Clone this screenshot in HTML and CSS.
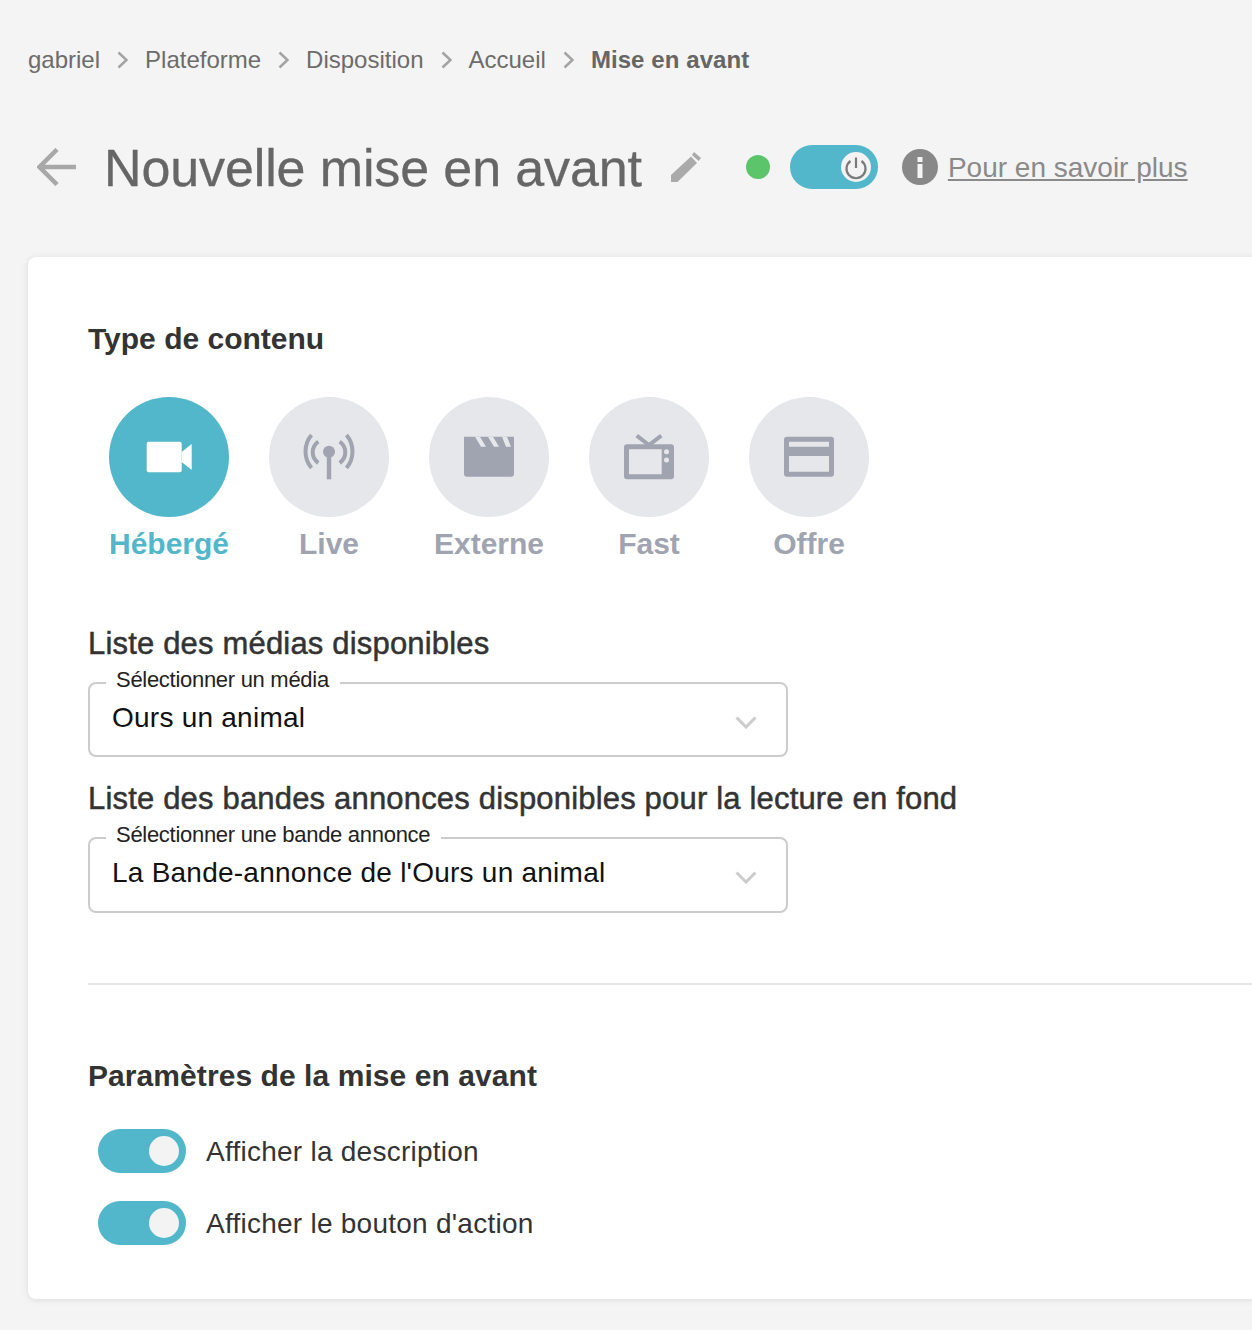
FILE: index.html
```html
<!DOCTYPE html>
<html lang="fr">
<head>
<meta charset="utf-8">
<title>Nouvelle mise en avant</title>
<link rel="stylesheet" href="styles.css">
</head>
<body>
<nav class="crumbs">
  <span>gabriel</span>
  <svg class="chev" viewBox="0 0 11 18"><path d="M1.500 1.500 9.500 9l-8 7.500"/></svg>
  <span>Plateforme</span>
  <svg class="chev" viewBox="0 0 11 18"><path d="M1.500 1.500 9.500 9l-8 7.500"/></svg>
  <span>Disposition</span>
  <svg class="chev" viewBox="0 0 11 18"><path d="M1.500 1.500 9.500 9l-8 7.500"/></svg>
  <span>Accueil</span>
  <svg class="chev" viewBox="0 0 11 18"><path d="M1.500 1.500 9.500 9l-8 7.500"/></svg>
  <strong>Mise en avant</strong>
</nav>

<header class="head">
  <svg class="back" viewBox="0 0 40 38"><path d="M39 19H4M20 1.500 2.500 19 20 36.500"/></svg>
  <h1 class="title">Nouvelle mise en avant</h1>
  <svg class="pencil" viewBox="0 0 30 30"><path d="M0 30v-7L20 4.500l6 6.500L6.500 30zM23 0l7 6-2.500 3L21 3z"/></svg>
  <span class="dot"></span>
  <span class="switch switch-power">
    <span class="knob">
      <svg class="power" viewBox="0 0 30 30"><path d="M15 5.500v10.500M9.500 9a9.500 9.500 0 1 0 11 0"/></svg>
    </span>
  </span>
  <svg class="info" viewBox="0 0 36 36"><circle cx="18" cy="18" r="18"/><rect class="info-mark" x="15.500" y="8" width="5" height="5"/><rect class="info-mark" x="15.500" y="15" width="5" height="14"/></svg>
  <a class="more" href="#">Pour en savoir plus</a>
</header>

<main class="card">
  <h2 class="section">Type de contenu</h2>
  <div class="types">
    <div class="type type-on">
      <span class="disc">
        <svg class="glyph" viewBox="0 0 60 60"><rect x="7.700" y="14.700" width="35" height="30.600" rx="2"/><path d="M42.700 25 52.700 17v26l-10-8z"/></svg>
      </span>
      <span class="type-label">Hébergé</span>
    </div>
    <div class="type">
      <span class="disc">
        <svg class="glyph" viewBox="0 0 60 60"><circle cx="30" cy="24.700" r="6"/><rect x="27.800" y="26" width="4.400" height="26.300"/><path class="wave" d="M12.500 8A25.700 25.700 0 0 0 12.500 41M19.300 14.700a13 13 0 0 0 0 21.300M47.500 8a25.700 25.700 0 0 1 0 33M40.700 14.700a13 13 0 0 1 0 21.300"/></svg>
      </span>
      <span class="type-label">Live</span>
    </div>
    <div class="type">
      <span class="disc">
        <svg class="glyph" viewBox="0 0 60 60"><path d="M5 9.700h50v37a3 3 0 0 1-3 3H8a3 3 0 0 1-3-3z"/><path class="cut" d="M16 9.700h5l6 10h-5zM29 9.700h5l6 10h-5zM43 9.700h5l4 10h-5z"/></svg>
      </span>
      <span class="type-label">Externe</span>
    </div>
    <div class="type">
      <span class="disc">
        <svg class="glyph" viewBox="0 0 60 60"><path class="antenna" d="M17.700 8.700 30 18 42.300 8.700"/><path fill-rule="evenodd" d="M8 17.300h44a3 3 0 0 1 3 3v29a3 3 0 0 1-3 3H8a3 3 0 0 1-3-3v-29a3 3 0 0 1 3-3zM10 22.300v25h32.700v-25z"/><circle class="cut" cx="47.500" cy="24.700" r="2.500"/><circle class="cut" cx="47.500" cy="33" r="2.500"/></svg>
      </span>
      <span class="type-label">Fast</span>
    </div>
    <div class="type">
      <span class="disc">
        <svg class="glyph" viewBox="0 0 60 60"><path fill-rule="evenodd" d="M8 9.700h44a3 3 0 0 1 3 3v34a3 3 0 0 1-3 3H8a3 3 0 0 1-3-3v-34a3 3 0 0 1 3-3zM10 14.700v5h40v-5zM10 29v15.700h40V29z"/></svg>
      </span>
      <span class="type-label">Offre</span>
    </div>
  </div>

  <h3 class="field-title field-first">Liste des médias disponibles</h3>
  <div class="select">
    <span class="legend">Sélectionner un média</span>
    <span class="value">Ours un animal</span>
    <svg class="caret" viewBox="0 0 22 13"><path d="M1.500 1.500 11 11l9.500-9.500"/></svg>
  </div>

  <h3 class="field-title field-next">Liste des bandes annonces disponibles pour la lecture en fond</h3>
  <div class="select select-tall">
    <span class="legend">Sélectionner une bande annonce</span>
    <span class="value">La Bande-annonce de l'Ours un animal</span>
    <svg class="caret" viewBox="0 0 22 13"><path d="M1.500 1.500 11 11l9.500-9.500"/></svg>
  </div>

  <hr class="rule">

  <h2 class="section section-params">Paramètres de la mise en avant</h2>
  <div class="options">
    <label class="option"><span class="switch"><span class="knob"></span></span><span class="option-text">Afficher la description</span></label>
    <label class="option"><span class="switch"><span class="knob"></span></span><span class="option-text">Afficher le bouton d'action</span></label>
  </div>
</main>
</body>
</html>
```

FILE: styles.css
```css
* { box-sizing: border-box; }

html, body { margin: 0; padding: 0; }

body {
  width: 1252px;
  height: 1330px;
  overflow: hidden;
  background: #f4f4f4;
  font-family: "Liberation Sans", Arial, sans-serif;
  color: #333;
}

.crumbs {
  display: flex;
  align-items: center;
  gap: 17px;
  height: 36px;
  margin: 42px 0 0 28px;
  font-size: 24px;
  line-height: 36px;
  color: #6c6c6c;
}

.crumbs strong { color: #666; letter-spacing: 0.08px; }

.chev {
  width: 11px;
  height: 18px;
  fill: none;
  stroke: #a3a3a3;
  stroke-width: 2.500;
}

.head {
  display: flex;
  align-items: center;
  height: 44px;
  margin: 67px 0 0 36px;
}

.back {
  width: 40px;
  height: 38px;
  margin-left: 1px;
  fill: none;
  stroke: #a8a8a8;
  stroke-width: 4.500;
}

.title {
  margin: 2px 0 0 27px;
  font-size: 52px;
  font-weight: 400;
  line-height: 44px;
  letter-spacing: -0.12px;
  color: #666;
  -webkit-text-stroke: 0.3px #666;
}

.pencil {
  width: 30px;
  height: 30px;
  margin-left: 29px;
  fill: #aaa;
}

.dot {
  width: 24px;
  height: 24px;
  margin-left: 45px;
  border-radius: 50%;
  background: #5cc46a;
}

.switch {
  display: flex;
  align-items: center;
  justify-content: flex-end;
  flex: none;
  width: 88px;
  height: 44px;
  padding-right: 7px;
  border-radius: 22px;
  background: #52b7ca;
}

.switch-power { margin-left: 20px; }

.knob {
  display: flex;
  width: 30px;
  height: 30px;
  border-radius: 50%;
  background: #f3f3f3;
}

.power {
  width: 30px;
  height: 30px;
  fill: none;
  stroke: #7a7a7a;
  stroke-width: 2.200;
}

.info {
  width: 36px;
  height: 36px;
  margin-left: 24px;
  fill: #888;
}

.info .info-mark { fill: #f4f4f4; }

.more {
  margin: 2px 0 0 10px;
  font-size: 28px;
  line-height: 36px;
  color: #8a8a8a;
}

.card {
  display: flex;
  flex-direction: column;
  width: 1400px;
  height: 1042px;
  margin: 68px 0 0 28px;
  padding: 64px 0 54px 60px;
  border-radius: 8px;
  background: #fff;
  box-shadow: 0 1px 6px rgba(0, 0, 0, 0.1);
}

.card > * { flex: none; }

.section {
  margin: 0;
  font-size: 30px;
  font-weight: 700;
  line-height: 36px;
  color: #333;
}

.section-params { letter-spacing: 0.07px; }

.types {
  display: flex;
  gap: 40px;
  margin: 40px 0 0 21px;
}

.type {
  display: flex;
  flex-direction: column;
  align-items: center;
  width: 120px;
}

.disc {
  display: flex;
  width: 120px;
  height: 120px;
  padding: 30px;
  border-radius: 50%;
  background: #e6e7eb;
}

.type-on .disc { background: #52b7ca; }

.glyph {
  width: 60px;
  height: 60px;
  fill: #a0a4b0;
}

.type-on .glyph { fill: #fff; }

.glyph .cut { fill: #e6e7eb; }

.glyph .wave,
.glyph .antenna {
  fill: none;
  stroke: #a0a4b0;
  stroke-width: 4;
}

.type-label {
  margin-top: 9px;
  font-size: 30px;
  font-weight: 700;
  line-height: 36px;
  white-space: nowrap;
  color: #a0a4b0;
}

.type-on .type-label { color: #52b7ca; }

.field-title {
  margin: 0 0 20px;
  font-size: 31px;
  font-weight: 400;
  line-height: 36px;
  letter-spacing: 0.18px;
  white-space: nowrap;
  color: #333;
  -webkit-text-stroke: 0.5px #333;
}

.field-first { margin-top: 64px; }
.field-next { margin-top: 24px; }

.select {
  position: relative;
  display: flex;
  align-items: flex-start;
  justify-content: space-between;
  width: 700px;
  height: 75px;
  padding: 16px 29px 0 22px;
  border: 2px solid #ccc;
  border-radius: 8px;
}

.select-tall { height: 76px; }

.legend {
  position: absolute;
  top: -17px;
  left: 16px;
  padding: 0 11px 0 10px;
  font-size: 22px;
  line-height: 26px;
  letter-spacing: -0.29px;
  color: #222;
  background: #fff;
}

.value {
  font-size: 28px;
  line-height: 36px;
  letter-spacing: 0.24px;
  color: #111;
}

.caret {
  width: 22px;
  height: 13px;
  margin-top: 16px;
  fill: none;
  stroke: #ccc;
  stroke-width: 3;
}

.rule {
  width: 100%;
  height: 2px;
  margin: 70px 0 73px;
  border: 0;
  background: #e6e6e6;
}

.options {
  display: flex;
  flex-direction: column;
  gap: 28px;
  margin: 35px 0 0 10px;
}

.option {
  display: flex;
  align-items: center;
  gap: 20px;
  height: 44px;
  font-size: 28px;
  line-height: 42px;
  color: #333;
}

.option-text {
  margin-top: 2px;
  letter-spacing: 0.25px;
}
```
